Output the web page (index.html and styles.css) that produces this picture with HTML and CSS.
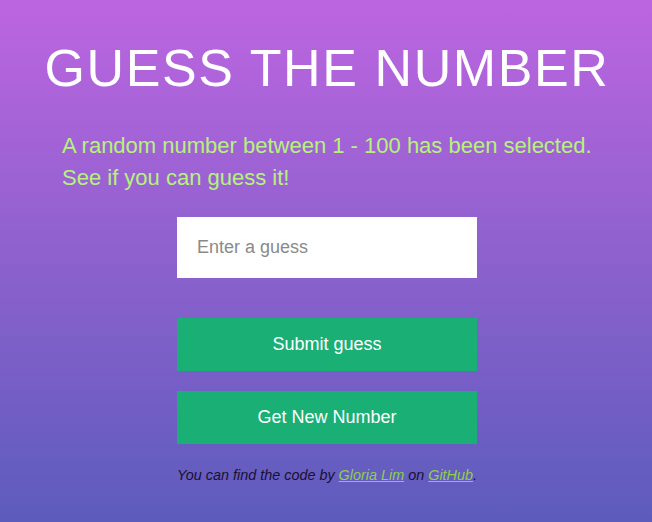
FILE: index.html
```html
<!DOCTYPE html>
<html lang="en">
<head>
<meta charset="utf-8">
<title>Guess the Number</title>
<link rel="stylesheet" href="styles.css">
</head>
<body>
<main class="app">
  <h1 class="title">GUESS THE NUMBER</h1>
  <p class="intro">A random number between 1 - 100 has been selected. See if you can guess it!</p>
  <input class="guess" type="text" placeholder="Enter a guess">
  <button class="btn btn-submit">Submit guess</button>
  <button class="btn btn-new">Get New Number</button>
  <p class="credit">You can find the code by <a href="#">Gloria Lim</a> on <a href="#">GitHub</a>.</p>
</main>
</body>
</html>
```
FILE: styles.css
```css
html, body {
  margin: 0;
  padding: 0;
  height: 100%;
}
body {
  background: linear-gradient(to bottom, #bd65e0 0%, #5c5cbc 100%);
  font-family: "Liberation Sans", Arial, sans-serif;
  overflow: hidden;
}
.app {
  display: flex;
  flex-direction: column;
  align-items: center;
  padding-left: 2px;
}
.title {
  margin: 38px 0 0;
  font-family: "Liberation Sans", Arial, sans-serif;
  font-weight: 400;
  font-size: 52px;
  line-height: 60px;
  letter-spacing: 1.6px;
  color: #ffffff;
  text-align: center;
}
.intro {
  align-self: stretch;
  margin: 32px 0 0;
  padding: 0 50px 0 60px;
  font-size: 22px;
  line-height: 32px;
  color: #b6f27c;
}
.guess {
  box-sizing: border-box;
  width: 300px;
  height: 61px;
  margin-top: 23px;
  padding: 0 20px;
  border: none;
  outline: none;
  background: #ffffff;
  font-family: "Liberation Sans", Arial, sans-serif;
  font-size: 18px;
  color: #333;
}
.guess::placeholder {
  color: #8a8a8a;
}
.btn {
  width: 300px;
  height: 53px;
  border: none;
  background: #1aaf75;
  color: #ffffff;
  font-family: "Liberation Sans", Arial, sans-serif;
  font-size: 18px;
  padding: 0;
}
.btn-submit {
  margin-top: 40px;
}
.btn-new {
  margin-top: 20px;
}
.credit {
  margin: 23px 0 0;
  font-size: 14.4px;
  font-style: italic;
  color: #1a1033;
  text-align: center;
}
.credit a {
  color: #8fcf4c;
}
```
